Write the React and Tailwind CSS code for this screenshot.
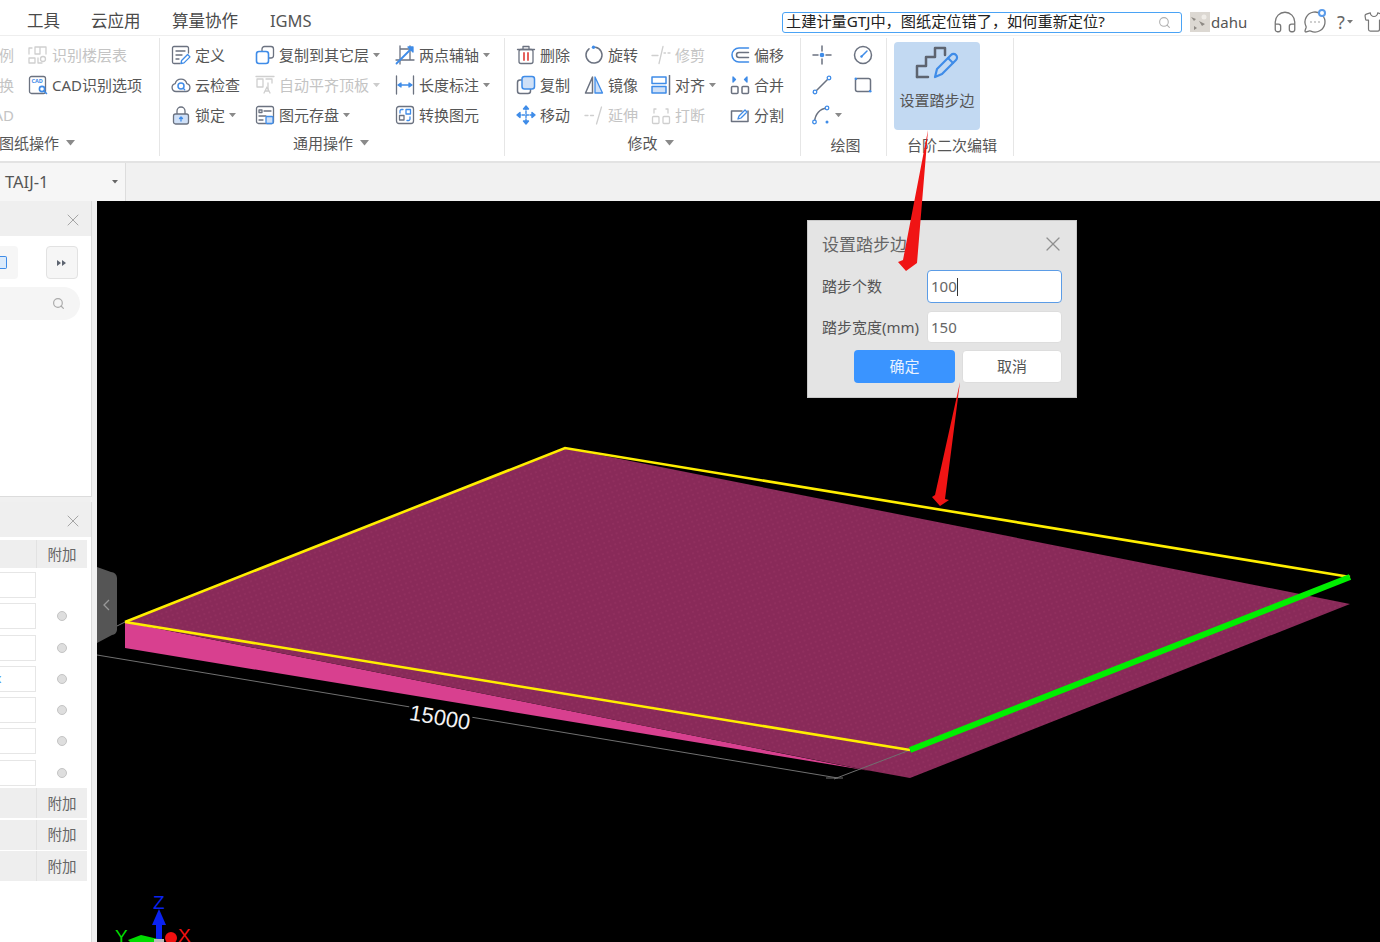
import { X, Search, Headphones, MessageCircleMore, Shirt } from "lucide-react";

const G = "#6b7280";
const B = "#3f8ce8";
const L = "#cfe0f7";
const D = "#cfcfcf";

function Svg({ children, size = 20 }) {
    return (
        <svg width={size} height={size} viewBox="0 0 20 20" fill="none" strokeWidth="1.3" strokeLinecap="round" strokeLinejoin="round" className="shrink-0">
            {children}
        </svg>
    );
}

const icons = {
    floorlist: <g stroke={D}><path d="M1 9V3h3M7 2h5v7H7zM12 2h6v7M1 18v-5h6v5zM10 13v5h4" /><circle cx="15" cy="14" r="2.5" /></g>,
    cad: <g><rect x="1.5" y="1.5" width="16" height="17" rx="2" stroke={G} /><text x="3.5" y="8" fontSize="5.5" fontWeight="700" fill={B}>CAD</text><circle cx="14" cy="14" r="2.6" stroke={B} strokeWidth="1.6" /><path d="M16 16l2.5 2.5" stroke={B} strokeWidth="1.6" /></g>,
    define: <g><path d="M17.5 8V3a1.5 1.5 0 0 0-1.5-1.5H3A1.5 1.5 0 0 0 1.5 3v14A1.5 1.5 0 0 0 3 18.500h6" stroke={G} /><path d="M5 6h9M5 10h6M5 14h3" stroke={G} /><path d="M10 18.500l.6-3 6-6 2.400 2.400-6 6z" stroke={B} /></g>,
    copyfloor: <g><rect x="7" y="1.500" width="11.500" height="11.500" rx="2.500" stroke={G} /><rect x="1.500" y="6.500" width="12" height="12" rx="2.500" fill="#fff" stroke={B} strokeWidth="1.6" /></g>,
    twopoint: <g><path d="M5 1v18M1 15h18M15 1v14M5 4h10" stroke={G} /><path d="M1.500 18.500L17 3" stroke={B} strokeWidth="1.8" /><path d="M13 2h5v5z" fill={B} stroke={B} /></g>,
    cloud: <g><path d="M5 16.500a4 4 0 0 1-.8-7.900 6 6 0 0 1 11.600 0 4 4 0 0 1-.8 7.900z" stroke={G} /><circle cx="10" cy="11" r="3" stroke={B} strokeWidth="1.5" /><path d="M12.200 13.200l1.500 1.500" stroke={B} /></g>,
    autoalign: <g stroke={D}><path d="M1 1.500h18M2 4h6v8H2zM11 4h6v4M13 8v6" /><path d="M9 18l3-6 3 6M10 16h4" /></g>,
    length: <g><path d="M1.500 1v18M18.500 1v18" stroke={G} /><path d="M3 10h14M3 10l3-2v4zM17 10l-3-2v4z" stroke={B} fill={B} /></g>,
    lock: <g><path d="M6 9V6a4 4 0 0 1 8 0v3" stroke={G} /><rect x="2.500" y="9" width="15" height="10" rx="2" fill={L} stroke={G} /><path d="M10 12v4M8.500 13.500L10 12l1.500 1.500" stroke={B} /></g>,
    store: <g><rect x="1.500" y="1.500" width="17" height="17" rx="2" stroke={G} /><rect x="4" y="5" width="3" height="2.500" stroke={G} /><path d="M9 6h7M4 11h7M4 15h4" stroke={G} /><rect x="11" y="11.500" width="7" height="7" rx="1" fill={L} stroke={B} /></g>,
    convert: <g><rect x="1.500" y="1.500" width="17" height="17" rx="2.500" stroke={G} /><rect x="4.500" y="10.500" width="4.500" height="4.500" stroke={G} /><path d="M5 8V6a1.500 1.500 0 0 1 1.500-1.500H8M15 12v2a1.500 1.500 0 0 1-1.500 1.500H12" stroke={B} /><rect x="11" y="4.500" width="4.500" height="4.500" stroke={B} /></g>,
    trash: <g><path d="M1.500 4.500h17M7 4V1.500h6V4" stroke={G} /><rect x="3" y="4.500" width="14" height="14" rx="2" stroke={G} /><path d="M8 8v7M12 8v7" stroke="#e2504c" strokeWidth="1.8" /></g>,
    rotate: <g><path d="M11.500 2.200A8 8 0 1 1 5 3.800" stroke={G} strokeWidth="1.500" /><circle cx="9.500" cy="2.200" r="1.700" fill={B} /></g>,
    trim: <g stroke={D}><path d="M1 10.500h6M12 1.500l-4 17M13 8h1.500M17 8h2" /></g>,
    offset: <g><path d="M18.500 3H9a7 7 0 0 0 0 14h9.500" stroke={B} strokeWidth="1.500" /><path d="M18.500 7.500H9a2.500 2.500 0 0 0 0 5h9.500" stroke={G} strokeWidth="1.500" /></g>,
    copy: <g><rect x="1.500" y="5" width="13" height="13.500" rx="2.500" stroke={G} strokeWidth="1.500" /><rect x="6" y="1.500" width="12.500" height="12.500" rx="2.500" fill={L} stroke={B} strokeWidth="1.500" /></g>,
    mirror: <g><path d="M8.500 2L1.500 18h7z" stroke={G} strokeWidth="1.500" /><path d="M11 2l7.500 16H11z" fill={L} stroke={B} strokeWidth="1.300" /></g>,
    align: <g><rect x="1" y="2" width="14" height="6.500" stroke={B} strokeWidth="1.500" /><rect x="1" y="11.500" width="14" height="6.500" fill={L} stroke={B} strokeWidth="1.500" /><path d="M18.500 .5v19" stroke={G} strokeWidth="1.500" /></g>,
    merge: <g><rect x="1.500" y="11.500" width="6.500" height="7" rx="1" stroke={G} strokeWidth="1.500" /><rect x="12" y="11.500" width="6.500" height="7" rx="1" stroke={G} strokeWidth="1.500" /><path d="M3 2l2.500 2.500L3 7zM17 2l-2.500 2.500L17 7z" fill={B} stroke={B} /></g>,
    move: <g stroke={B} strokeWidth="1.400"><path d="M10 2v16M2 10h16" strokeDasharray="2.500 1.500" /><path d="M10 1l2.500 3h-5zM10 19l2.500-3h-5zM1 10l3-2.500v5zM19 10l-3-2.500v5z" fill={B} /></g>,
    extend: <g stroke={D}><path d="M1 10.500h3M6.500 10.500h3M17.500 2l-5 17" /></g>,
    breakit: <g stroke={D}><rect x="1.500" y="11.500" width="6.500" height="7" rx="1" /><rect x="12" y="11.500" width="6.500" height="7" rx="1" /><path d="M3 8V4h2M17 8V4h-2" /></g>,
    split: <g><path d="M18 6v10.500H1.500V6H12" stroke={G} strokeWidth="1.500" /><path d="M8 14l1-3 6-6 2 2-6 6z" stroke={B} /></g>,
    point: <g><path d="M10 1v5M10 14v5M1 10h5M14 10h5" stroke={G} strokeWidth="1.500" /><circle cx="10" cy="10" r="2.300" fill={B} /></g>,
    gauge: <g><circle cx="10" cy="10" r="8.500" stroke={G} strokeWidth="1.500" /><path d="M8.500 11.500L14 6" stroke={B} strokeWidth="1.500" /><circle cx="8.500" cy="11.500" r="1.200" fill={B} /></g>,
    line: <g><path d="M3 17L17 3" stroke={G} strokeWidth="1.500" /><circle cx="3" cy="17" r="1.800" fill="#fff" stroke={B} /><circle cx="17" cy="3" r="1.800" fill="#fff" stroke={B} /></g>,
    rect: <g><rect x="2.500" y="3.500" width="15" height="13" rx="2" stroke={G} strokeWidth="1.500" /><circle cx="2.800" cy="3.800" r="1.300" fill={B} /><circle cx="17.200" cy="16.200" r="1.300" fill={B} /></g>,
    curve: <g><path d="M2.500 17C3 9 8 3.500 15 3" stroke={G} strokeWidth="1.500" /><circle cx="2.500" cy="17" r="1.800" fill="#fff" stroke={B} /><circle cx="15" cy="3" r="1.800" fill="#fff" stroke={B} /><circle cx="15" cy="17" r="1.500" fill={B} /></g>,
};

function Caret({ color = "#8a8a8a", w = 7 }) {
    return (
        <svg width={w} height={w * 0.6} viewBox="0 0 10 6" className="shrink-0">
            <path d="M0 0h10L5 6z" fill={color} />
        </svg>
    );
}

function Item({ icon, label, caret, disabled }) {
    return (
        <div className="flex h-[30px] items-center whitespace-nowrap">
            <Svg>{icons[icon]}</Svg>
            {label && <span className={"ml-[4px] text-[15px] " + (disabled ? "text-[#c4c4c4]" : "text-[#565656]")}>{label}</span>}
            {caret && <span className="ml-[4px]"><Caret color={disabled ? "#cccccc" : "#8a8a8a"} /></span>}
        </div>
    );
}

function Group({ className, label, caret, children, labelClass = "" }) {
    return (
        <div className={"relative flex h-[118px] shrink-0 flex-col border-r border-[#e6e6e6] " + className}>
            <div className="flex h-[95px] shrink-0 items-start">{children}</div>
            <div className={"flex items-center justify-center gap-[7px] text-[15px] leading-[20px] text-[#565656] whitespace-nowrap " + labelClass}>
                {label}
                {caret && <Caret w={9} />}
            </div>
        </div>
    );
}

function MenuBar() {
    return (
        <div className="flex h-[36px] shrink-0 items-center border-b border-[#eeeeee] bg-white pt-[9px]">
            <nav className="-mt-[2px] flex w-[782px] shrink-0 pl-[27px] text-[16.500px] leading-none text-[#4a4a4a]">
                <span className="w-[64px]">工具</span>
                <span className="w-[81px]">云应用</span>
                <span className="w-[98px]">算量协作</span>
                <span className="text-[#555]">IGMS</span>
            </nav>
            <div className="flex h-[21px] w-[400px] shrink-0 items-center justify-between rounded-[3px] border border-[#4aa3f5] pl-[3px] pr-[10px]">
                <span className="whitespace-nowrap text-[15.200px] leading-none text-[#222]">土建计量GTJ中，图纸定位错了，如何重新定位?</span>
                <Search className="h-[13px] w-[13px] text-[#b0b0b0]" strokeWidth={2} />
            </div>
            <svg width="20" height="20" viewBox="0 0 20 20" className="ml-[8px] shrink-0">
                <rect width="20" height="20" fill="#dcd8d2" />
                <path d="M1 5l5 2-2 2zM9 9l6 3-3 2zM4 14l3 2-3 2z" fill="#8e8a84" />
                <circle cx="14" cy="5" r="2.500" fill="#f0ede8" />
            </svg>
            <span className="ml-[1px] w-[35px] text-[15px] leading-none text-[#555]">dahu</span>
            <Headphones className="ml-[26px] h-[26px] w-[26px] shrink-0 text-[#777]" strokeWidth={1.2} />
            <span className="relative ml-[5px] shrink-0">
                <MessageCircleMore className="h-[24px] w-[24px] text-[#777]" strokeWidth={1.3} />
                <span className="absolute right-[1px] -top-[1px] h-[8px] w-[8px] rounded-full border-2 border-[#5a9bea] bg-white" />
            </span>
            <span className="ml-[10px] text-[18px] leading-none text-[#666]">?</span>
            <span className="ml-[2px]"><Caret color="#777" w={6} /></span>
            <Shirt className="ml-[10px] h-[22px] w-[22px] shrink-0 text-[#777]" strokeWidth={1.3} />
        </div>
    );
}

function Ribbon() {
    return (
        <div className="flex h-[127px] shrink-0 items-start overflow-hidden border-b-2 border-[#e3e3e3] bg-white pt-[2px]">
            <Group className="w-[160px] overflow-hidden" label="图纸操作" caret labelClass="!justify-start -ml-[1px]">
                <div className="mt-[2px] flex w-[14px] flex-col items-end overflow-hidden text-[15px] text-[#c4c4c4] whitespace-nowrap">
                    <div className="flex h-[30px] items-center">比例</div>
                    <div className="flex h-[30px] items-center">转换</div>
                    <div className="flex h-[30px] items-center">CAD</div>
                </div>
                <div className="ml-[14px] mt-[2px]">
                    <Item icon="floorlist" label="识别楼层表" disabled />
                    <Item icon="cad" label="CAD识别选项" />
                </div>
            </Group>
            <Group className="w-[345px]" label="通用操作" caret labelClass="-ml-[2px]">
                <div className="ml-[11px] mt-[2px] w-[84px]">
                    <Item icon="define" label="定义" />
                    <Item icon="cloud" label="云检查" />
                    <Item icon="lock" label="锁定" caret />
                </div>
                <div className="mt-[2px] w-[140px]">
                    <Item icon="copyfloor" label="复制到其它层" caret />
                    <Item icon="autoalign" label="自动平齐顶板" caret disabled />
                    <Item icon="store" label="图元存盘" caret />
                </div>
                <div className="mt-[2px]">
                    <Item icon="twopoint" label="两点辅轴" caret />
                    <Item icon="length" label="长度标注" caret />
                    <Item icon="convert" label="转换图元" />
                </div>
            </Group>
            <Group className="w-[296px]" label="修改" caret labelClass="-ml-[4px]">
                <div className="ml-[11px] mt-[2px] w-[68px]">
                    <Item icon="trash" label="删除" />
                    <Item icon="copy" label="复制" />
                    <Item icon="move" label="移动" />
                </div>
                <div className="mt-[2px] w-[67px]">
                    <Item icon="rotate" label="旋转" />
                    <Item icon="mirror" label="镜像" />
                    <Item icon="extend" label="延伸" disabled />
                </div>
                <div className="mt-[2px] w-[79px]">
                    <Item icon="trim" label="修剪" disabled />
                    <Item icon="align" label="对齐" caret />
                    <Item icon="breakit" label="打断" disabled />
                </div>
                <div className="mt-[2px]">
                    <Item icon="offset" label="偏移" />
                    <Item icon="merge" label="合并" />
                    <Item icon="split" label="分割" />
                </div>
            </Group>
            <Group className="w-[86px]" label="绘图" labelClass="ml-[4px] mt-[2px]">
                <div className="ml-[11px] mt-[2px] w-[41px]">
                    <Item icon="point" />
                    <Item icon="line" />
                    <div className="flex h-[30px] items-center whitespace-nowrap">
                        <Svg>{icons.curve}</Svg>
                        <span className="ml-[3px]"><Caret /></span>
                    </div>
                </div>
                <div className="mt-[2px]">
                    <Item icon="gauge" />
                    <Item icon="rect" />
                </div>
            </Group>
            <Group className="w-[127px]" label="台阶二次编辑" labelClass="ml-[4px] mt-[2px]">
                <div className="ml-[7px] mt-[4px] flex h-[88px] w-[86px] flex-col items-center rounded-[4px] bg-[#c2d9f2]">
                    <svg width="44" height="38" viewBox="0 0 44 38" fill="none" strokeLinecap="round" strokeLinejoin="round" className="mt-[3px]">
                        <path d="M2 32V21h9v-9h9V3h10v7" stroke="#5d6470" strokeWidth="2.500" />
                        <path d="M2 32h11" stroke="#5d6470" strokeWidth="2.500" />
                        <path d="M20 32l2-8 14-14a3 3 0 0 1 5 5L27 29z" stroke="#3f8ce8" strokeWidth="2.200" fill="#c2d9f2" />
                        <path d="M33 13l5 5" stroke="#3f8ce8" strokeWidth="2" />
                    </svg>
                    <span className="mt-[7px] text-[15px] leading-[20px] text-[#565656]">设置踏步边</span>
                </div>
            </Group>
        </div>
    );
}

function TabBar() {
    return (
        <div className="flex h-[38px] shrink-0 bg-[#f1f1f1]">
            <div className="flex w-[126px] items-center justify-between border-r border-[#dddddd] bg-[#f6f6f6] pl-[5px] pr-[7px]">
                <span className="text-[16.500px] leading-none text-[#555]">TAIJ-1</span>
                <Caret color="#666" w={6} />
            </div>
        </div>
    );
}

function PanelHeader() {
    return (
        <div className="flex h-[35px] shrink-0 items-center justify-end bg-[#efefef] pr-[8px] pt-[3px]">
            <X className="h-[20px] w-[20px] text-[#a5a5a5]" strokeWidth={1.2} />
        </div>
    );
}

function AttachRow({ height }) {
    return (
        <div className={"flex w-[87px] bg-[#eeeeee] " + height}>
            <div className="w-[37px] border-r border-[#e2e2e2]" />
            <div className="flex flex-1 items-center justify-center text-[14.500px] leading-none text-[#666]">附加</div>
        </div>
    );
}

function InputRow({ dot, blue }) {
    return (
        <div className="flex h-[31.3px] w-[87px] items-start">
            <div className="flex h-[26px] w-[36px] items-center overflow-hidden border border-l-0 border-[#e6e6e6] bg-white">
                {blue && <span className="-ml-[5px] text-[12px] leading-none text-[#3f8ce8]">x</span>}
            </div>
            {dot && <div className="ml-[21px] mt-[8px] h-[10px] w-[10px] rounded-full border border-[#c4c4c4] bg-[#dedede]" />}
        </div>
    );
}

function LeftPanel() {
    return (
        <div className="flex w-[97px] shrink-0 flex-col bg-[#f0f0f0]">
            <div className="flex h-[296px] w-[92px] shrink-0 flex-col border-r border-b border-[#dcdcdc] bg-white">
                <PanelHeader />
                <div className="mt-[10px] flex h-[33px] items-start">
                    <div className="flex h-[33px] w-[18px] items-center rounded-r-[4px] bg-[#f6f6f6]">
                        <div className="h-[13px] w-[7px] rounded-r-[2px] border border-l-0 border-[#3f8ce8] bg-[#dcebfb]" />
                    </div>
                    <div className="ml-[28px] flex h-[33px] w-[32px] items-center justify-center rounded-[4px] border border-[#e2e2e2] bg-[#f6f6f6]">
                        <svg width="10" height="6" viewBox="0 0 10 6"><path d="M0 0l4 3-4 3zM5 0l4 3-4 3z" fill="#5d6470" /></svg>
                    </div>
                </div>
                <div className="mt-[8px] flex h-[33px] w-[80px] items-center justify-end rounded-r-full bg-[#f5f5f5] pr-[15px]">
                    <Search className="h-[13px] w-[13px] text-[#aaaaaa]" strokeWidth={2.2} />
                </div>
            </div>
            <div className="mt-[5px] flex flex-1 w-[92px] flex-col border-r border-[#dcdcdc] bg-white">
                <PanelHeader />
                <div className="mt-[3px]"><AttachRow height="h-[28px]" /></div>
                <div className="h-[220px] overflow-hidden pt-[4px]">
                    <InputRow />
                    <InputRow dot />
                    <InputRow dot />
                    <InputRow dot blue />
                    <InputRow dot />
                    <InputRow dot />
                    <InputRow dot />
                </div>
                <div className="flex flex-col gap-[1.500px]">
                    <AttachRow height="h-[30px]" />
                    <AttachRow height="h-[30px]" />
                    <AttachRow height="h-[30px]" />
                </div>
            </div>
        </div>
    );
}

// the 3D view, drawn in page coordinates
function Scene() {
    return (
        <svg viewBox="97 201 1283 741" className="block h-full w-full">
            <defs>
                <pattern id="weave" width="5" height="5" patternUnits="userSpaceOnUse" patternTransform="rotate(-20)">
                    <rect width="5" height="5" fill="#892a59" />
                    <circle cx="2" cy="2" r="1" fill="#93305f" />
                </pattern>
            </defs>
            <path d="M97 655L838 778" stroke="#707070" strokeWidth="1" />
            <path d="M117 626L125 622" stroke="#777" strokeWidth="1" />
            <polygon points="125,622 125,648 870,771" fill="#d8408f" />
            <polygon points="125,622 565,448 1350,604 910,778 866,770" fill="url(#weave)" />
            <path d="M910 750L834 779M826 778H843" stroke="#707070" strokeWidth="1" />
            <path d="M125 622L565 448L1350 577M125 622L910 750" stroke="#ffee00" strokeWidth="2.600" fill="none" />
            <path d="M910 750L1350 577" stroke="#00f000" strokeWidth="6" />
            <g transform="rotate(9.500 440 717)">
                <rect x="408" y="704" width="64" height="26" fill="#000" />
                <text x="440" y="725" textAnchor="middle" fontSize="22" fill="#f2f2f2" fontFamily="'Liberation Sans',sans-serif">15000</text>
            </g>
            <path d="M97 567l14 5a6 6 0 0 1 6 6v52a6 6 0 0 1-5 5l-15 8z" fill="#555555" />
            <path d="M109 600l-5 5 5 5" stroke="#999" strokeWidth="1.300" fill="none" />
            <g fontFamily="'Liberation Sans',sans-serif" fontSize="19">
                <text x="153" y="909" fill="#0a22f0">Z</text>
                <text x="178" y="942" fill="#f01010">X</text>
                <text x="115" y="943" fill="#00dc00">Y</text>
            </g>
            <polygon points="159,909 166,925 162,925 162,942 156,942 156,925 152,925" fill="#0a22f0" />
            <polygon points="128,940 141,935 158,939 158,942 130,942" fill="#00dc00" />
            <circle cx="171" cy="938" r="6" fill="#f01010" />
            <rect x="154" y="939" width="10" height="3" fill="#bbbbbb" />
        </svg>
    );
}

function Dialog() {
    return (
        <div className="absolute left-[710px] top-[19px] flex h-[178px] w-[270px] flex-col border border-[#c9c9c9] bg-[#e4e4e4] px-[14px]">
            <div className="flex h-[49px] shrink-0 items-center justify-between pb-[3px]">
                <span className="text-[17px] leading-none text-[#666]">设置踏步边</span>
                <X className="-mr-[3px] h-[24px] w-[24px] text-[#8f8f8f]" strokeWidth={1.2} />
            </div>
            <div className="flex h-[33px] items-center justify-between">
                <span className="text-[15px] text-[#555]">踏步个数</span>
                <div className="flex h-[33px] w-[135px] items-center rounded-[4px] border border-[#5b9ce6] bg-white pl-[3px] text-[15px] text-[#666]">
                    100<span className="h-[18px] w-px bg-[#333]" />
                </div>
            </div>
            <div className="mt-[8px] flex h-[32px] items-center justify-between">
                <span className="text-[15px] text-[#555]">踏步宽度(mm)</span>
                <div className="flex h-[32px] w-[135px] items-center rounded-[4px] border border-[#dddddd] bg-white pl-[3px] text-[15px] text-[#666]">150</div>
            </div>
            <div className="mt-[7px] flex h-[33px] justify-end gap-[7px]">
                <button className="w-[101px] rounded-[4px] bg-[#3a94ff] text-[15px] text-[#e8f2ff]">确定</button>
                <button className="w-[100px] rounded-[4px] border border-[#dddddd] bg-white text-[15px] text-[#555]">取消</button>
            </div>
        </div>
    );
}

export default function App() {
    return (
        <div className="relative flex h-screen w-full flex-col overflow-hidden bg-white font-['Noto_Sans','Noto_Sans_CJK_SC',sans-serif]">
            <MenuBar />
            <Ribbon />
            <TabBar />
            <div className="flex min-h-0 flex-1">
                <LeftPanel />
                <div className="relative min-w-0 flex-1 bg-black">
                    <Scene />
                    <Dialog />
                </div>
            </div>
            {/* red annotation arrows on top of everything */}
            <svg viewBox="0 0 1380 942" className="pointer-events-none absolute inset-0 h-full w-full">
                <polygon points="928,130 917,263 906,271 898,262 903,260" fill="#f01414" />
                <polygon points="960,382 945,499 949,500 940,506 932,497 935,495" fill="#f01414" />
            </svg>
        </div>
    );
}
